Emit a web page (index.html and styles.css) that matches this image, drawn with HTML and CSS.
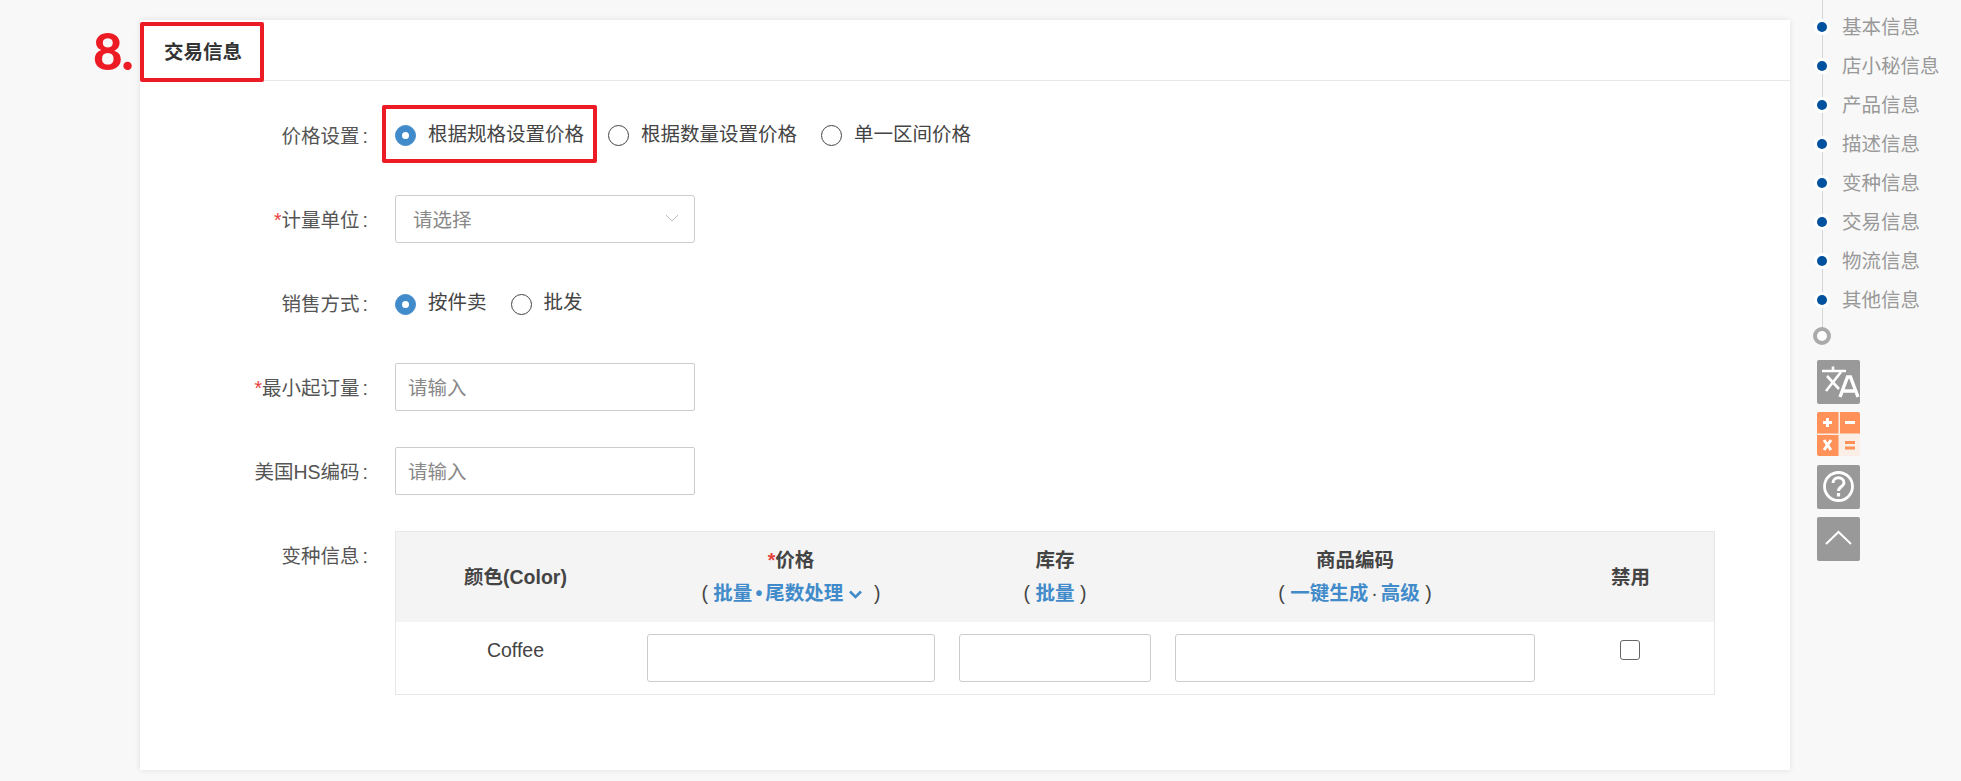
FILE: index.html
```html
<!DOCTYPE html>
<html lang="zh-CN">
<head>
<meta charset="utf-8">
<title>交易信息</title>
<link rel="stylesheet" href="styles.css">
</head>
<body>
<div class="page">
  <main class="main">
    <section class="card">
      <span class="step-no">8.</span>
      <span class="mark mark-title"></span>
      <span class="mark mark-radio"></span>
      <header class="card-head"><h2 class="card-title">交易信息</h2></header>
      <form class="form">
        <div class="row">
          <div class="label">价格设置<span class="colon">:</span></div>
          <div class="radios radios-up">
            <label class="radio"><span class="dot on"></span>根据规格设置价格</label>
            <label class="radio"><span class="dot"></span>根据数量设置价格</label>
            <label class="radio"><span class="dot"></span>单一区间价格</label>
          </div>
        </div>
        <div class="row">
          <div class="label"><span class="req">*</span>计量单位<span class="colon">:</span></div>
          <div class="select">
            <span class="select-text">请选择</span>
            <svg class="select-arrow" width="14" height="8" viewBox="0 0 14 8"><polyline points="1,1 7,7 13,1" fill="none" stroke="#bbb" stroke-width="1"/></svg>
          </div>
        </div>
        <div class="row">
          <div class="label">销售方式<span class="colon">:</span></div>
          <div class="radios">
            <label class="radio"><span class="dot on"></span>按件卖</label>
            <label class="radio"><span class="dot"></span>批发</label>
          </div>
        </div>
        <div class="row">
          <div class="label"><span class="req">*</span>最小起订量<span class="colon">:</span></div>
          <div class="input">请输入</div>
        </div>
        <div class="row">
          <div class="label">美国HS编码<span class="colon">:</span></div>
          <div class="input">请输入</div>
        </div>
        <div class="row">
          <div class="label">变种信息<span class="colon">:</span></div>
          <div class="table">
            <div class="thead">
              <div class="th">颜色(Color)</div>
              <div class="th"><div><span class="req">*</span>价格</div><div class="sub">( <a class="lnk">批量</a><a class="lnk sep">•</a><a class="lnk">尾数处理</a><svg class="caret" width="15" height="9" viewBox="0 0 15 9"><polyline points="2,1.500 7.500,7 13,1.500" fill="none" stroke="#428bca" stroke-width="2.600"/></svg> &nbsp;)</div></div>
              <div class="th"><div>库存</div><div class="sub">( <a class="lnk">批量</a> )</div></div>
              <div class="th"><div>商品编码</div><div class="sub">( <a class="lnk">一键生成</a><span class="sep">·</span><a class="lnk">高级</a> )</div></div>
              <div class="th">禁用</div>
            </div>
            <div class="tbody">
              <div class="td td-name">Coffee</div>
              <div class="td"><div class="cell-input"></div></div>
              <div class="td"><div class="cell-input"></div></div>
              <div class="td"><div class="cell-input"></div></div>
              <div class="td td-check"><span class="check"></span></div>
            </div>
          </div>
        </div>
      </form>
    </section>
  </main>
  <aside class="rail">
    <nav class="steps">
      <a class="step">基本信息</a>
      <a class="step">店小秘信息</a>
      <a class="step">产品信息</a>
      <a class="step">描述信息</a>
      <a class="step">变种信息</a>
      <a class="step">交易信息</a>
      <a class="step">物流信息</a>
      <a class="step">其他信息</a>
      <span class="step-end"></span>
    </nav>
    <div class="tools">
      <div class="tool">
        <svg width="44" height="44" viewBox="0 0 44 44" fill="none" stroke="#fff">
          <path d="M5 11H29M16 6.500V11" stroke-width="2.600"/>
          <path d="M9 31L24 12M10 16L22 29" stroke-width="2.600"/>
          <path d="M23 37L30.500 17H33.500L41 37M26 31H38" stroke-width="3.400"/>
        </svg>
      </div>
      <div class="tool tool-calc">
        <svg width="44" height="44" viewBox="0 0 44 44">
          <rect width="21.500" height="21.500" fill="#ff9159"/>
          <rect x="23" width="21" height="21.500" fill="#ff9159"/>
          <rect y="23" width="21.500" height="21" fill="#ff9159"/>
          <rect x="23" y="23" width="21" height="21" fill="#fbeee6"/>
          <path d="M6 10.500H15M10.500 6V15M28 10.500H38" stroke="#fff" stroke-width="3" fill="none"/>
          <path d="M7 28L14 38M14 28L7 38" stroke="#fff" stroke-width="3" fill="none"/>
          <path d="M28 30.500H38M28 36H38" stroke="#ff9159" stroke-width="3" fill="none"/>
        </svg>
      </div>
      <div class="tool">
        <svg width="44" height="44" viewBox="0 0 44 44" fill="none" stroke="#fff">
          <circle cx="21.500" cy="21.500" r="14" stroke-width="2.800"/>
          <path d="M16 18C16 11 27 11 27 18C27 21.500 21.500 21.500 21.500 26" stroke-width="3"/>
          <path d="M21.500 28V31.500" stroke-width="3.200"/>
        </svg>
      </div>
      <div class="tool">
        <svg width="44" height="44" viewBox="0 0 44 44" fill="none" stroke="#fff">
          <polyline points="9,27 21.500,15 34,27" stroke-width="2"/>
        </svg>
      </div>
    </div>
  </aside>
</div>
</body>
</html>
```

FILE: styles.css
```css
* { box-sizing: border-box; }
html, body { margin: 0; height: 100%; overflow: hidden; }
body {
  background: #f8f8f8;
  color: #333;
  font-family: "Liberation Sans", "Noto Sans CJK SC", sans-serif;
  font-size: 19.5px;
}
.page { display: flex; height: 781px; }
.main { padding: 20px 0 0 140px; }

.card {
  position: relative;
  width: 1650px;
  height: 750px;
  background: #fff;
  box-shadow: 0 0 6px rgba(0, 0, 0, .1);
}
.card-head {
  height: 61px;
  border-bottom: 1px solid #e8e8e8;
  padding-left: 24px;
  display: flex;
  align-items: center;
}
.card-title { margin: 0; font-size: 19.5px; font-weight: 700; color: #333; }

.step-no {
  position: absolute;
  left: -47px;
  top: 2px;
  font-family: Lato, "Liberation Sans", sans-serif;
  font-size: 51px;
  line-height: 58px;
  font-weight: 900;
  letter-spacing: -1px;
  color: #ed1c24;
}
.mark { position: absolute; border: 4px solid #ed1c24; border-radius: 2px; z-index: 2; }
.mark-title { left: 0; top: 2px; width: 124px; height: 60px; }
.mark-radio { left: 242px; top: 85px; width: 215px; height: 58px; }

.form {
  padding: 30px 75px 0 0;
  display: flex;
  flex-direction: column;
  gap: 36px;
}
.row { display: flex; min-height: 48px; }
.label {
  flex: 0 0 229px;
  height: 48px;
  margin-right: 26px;
  text-align: right;
  line-height: 51px;
  color: #555;
  white-space: nowrap;
}
.colon { margin-left: 3px; margin-right: 1px; }
.req { color: #e8413c; }

.radios { display: flex; align-items: center; gap: 24px; height: 48px; }
.radios-up { height: 47px; }
.radio { display: flex; align-items: center; gap: 12px; padding-bottom: 2px; color: #444; white-space: nowrap; line-height: 24px; }
.dot {
  width: 21px;
  height: 21px;
  border: 1px solid #444;
  border-radius: 50%;
  background: #fff;
  display: block;
  margin-top: 4px;
}
.dot.on { background: #428bca; border-color: #428bca; position: relative; }
.dot.on::after {
  content: "";
  position: absolute;
  left: 6px;
  top: 6px;
  width: 7px;
  height: 7px;
  border-radius: 50%;
  background: #fff;
}

.select, .input {
  width: 300px;
  height: 48px;
  background: #fff;
  border: 1px solid #ccc;
  border-radius: 2px;
  display: flex;
  align-items: center;
  color: #888;
}
.select { justify-content: space-between; padding: 0 15px 2px 17px; border-radius: 3px; }
.input { padding: 0 0 2px 12px; }

.table { width: 1320px; border: 1px solid #e6e6e6; }
.thead, .tbody { display: grid; grid-template-columns: 239px 312px 216px 384px 1fr; }
.thead { height: 90px; background: #f4f4f4; }
.tbody { height: 72px; }
.th {
  display: flex;
  flex-direction: column;
  align-items: center;
  justify-content: center;
  gap: 9px;
  font-weight: 700;
  color: #444;
  line-height: 24px;
  white-space: nowrap;
}
.sub { font-weight: 400; margin-bottom: 2px; }
.lnk { color: #428bca; font-weight: 700; }
.sep { margin: 0 3px; }
.caret { margin-left: 5px; vertical-align: 1px; }
.td { padding: 12px 12px 0; display: flex; justify-content: center; }
.td-name { padding-top: 15px; line-height: 26px; color: #444; }
.td-check { padding: 18px 14px 0 12px; }
.cell-input { width: 100%; height: 48px; border: 1px solid #ccc; border-radius: 3px; background: #fff; }
.check { width: 20px; height: 20px; border: 1px solid #666; border-radius: 3px; background: #fff; }

.rail { margin-left: 27px; width: 144px; }
.steps { position: relative; padding-top: 7px; display: flex; flex-direction: column; height: 346px; }
.steps::before {
  content: "";
  position: absolute;
  left: 4.500px;
  top: 0;
  width: 1px;
  height: 330px;
  background: #d5d5d5;
}
.step {
  position: relative;
  height: 39px;
  padding-left: 25px;
  line-height: 41px;
  color: #999;
  white-space: nowrap;
}
.step::before {
  content: "";
  position: absolute;
  left: 0;
  top: 15px;
  width: 10px;
  height: 10px;
  border-radius: 50%;
  background: #00519e;
  box-shadow: 0 0 0 3px #fff;
}
.step-end {
  position: absolute;
  left: -4px;
  top: 327px;
  width: 18px;
  height: 18px;
  border: 4px solid #aaa;
  border-radius: 50%;
  background: #fff;
}
.tools { display: flex; flex-direction: column; gap: 8.300px; margin-top: 14px; }
.tool { width: 43px; height: 44px; background: #999; border-radius: 2px; overflow: hidden; }
.tool svg { display: block; }
.tool-calc { background: #fbeee6; }
```
